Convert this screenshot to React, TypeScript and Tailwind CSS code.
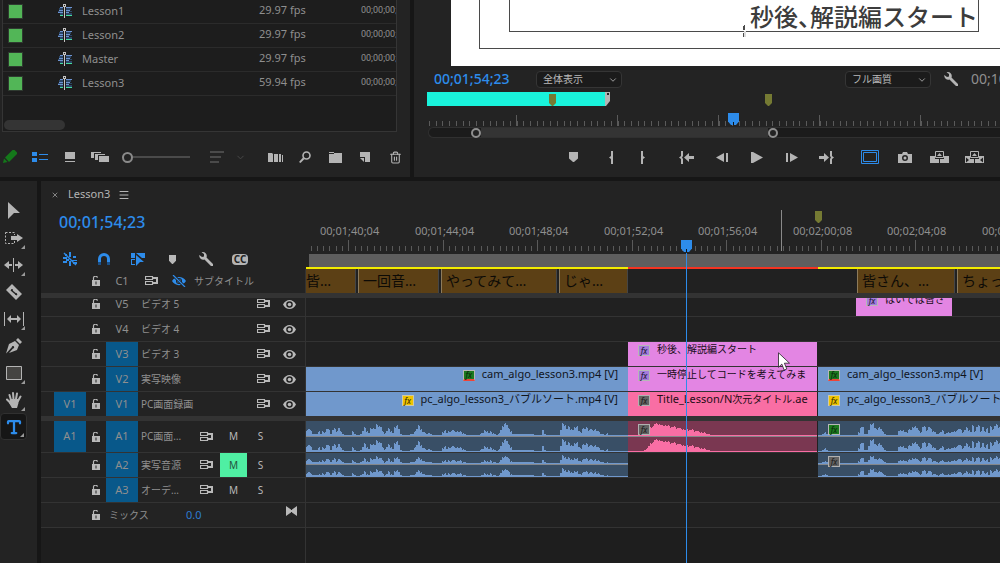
import type { ReactNode } from 'react';
import { cx } from 'class-variance-authority';
import { ChevronDown, Menu, Trash2, Type, X } from 'lucide-react';

const FONT = "font-['Noto_Sans','Noto_Sans_CJK_JP',sans-serif]";

const sequences = [
  { name: 'Lesson1', fps: '29.97 fps', start: '00;00;00;00' },
  { name: 'Lesson2', fps: '29.97 fps', start: '00;00;00;00' },
  { name: 'Master', fps: '29.97 fps', start: '00;00;00;00' },
  { name: 'Lesson3', fps: '59.94 fps', start: '00;00;00;00' },
];

/* ---------- icons ---------- */

const Svg = ({ w, h, children, className }: { w: number; h: number; children: ReactNode; className?: string }) => (
  <svg width={w} height={h} viewBox={`0 0 ${w} ${h}`} fill="currentColor" className={cx('shrink-0', className)} aria-hidden="true">
    {children}
  </svg>
);

const SequenceIcon = () => (
  <Svg w={14} h={14}>
    <path fill="#2c4768" d="M1 4h4v2H1zM0 7h5v1H0zM8 4h5v2H8zM8 7h6v1H8zM2 9h3v2H2zM8 9h6v2H8z" />
    <path fill="#6d93d0" d="M2 3h3v1H2zM1 6h4v1H1zM0 8h5v1H0zM8 3h6v1H8zM8 6h4v1H8zM8 8h3v1H8z" />
    <path fill="#45dca0" d="M2 11h3v1H2zM8 11h6v1H8z" />
    <path fill="#c4c4c4" d="M5 0h3v3H7v11H6V3H5z" />
    <path fill="#1d1d1d" d="M6 1h1v1H6z" />
  </Svg>
);

const PenIcon = () => (
  <Svg w={14} h={14} className="text-[#14781a]">
    <path d="M0 13l1-4.500 3.500 3.500zM2 7.500L9.500 0h2L14 2.500v1.500L6 12z" />
  </Svg>
);

const ListIcon = () => (
  <Svg w={16} h={10} className="text-[#2d8ceb]">
    <path d="M0 0h5v4H0zM0 6h5v4H0zM7 2h9v1H7zM7 7h9v1H7z" />
  </Svg>
);

const ThumbIcon = () => (
  <Svg w={10} h={10}>
    <path d="M0 0h10v7H0zM0 9h10v1H0z" />
  </Svg>
);

const StackIcon = () => (
  <Svg w={18} h={10}>
    <path d="M0 0h10v1H3v5H0zM4 2h10v1H7v5H4zM8 4h10v6H8z" />
  </Svg>
);

const SortIcon = () => (
  <Svg w={14} h={12} className="text-[#4a4a4a]">
    <path d="M0 0h14v2H0zM0 5h11v2H0zM0 10h9v2H0z" />
  </Svg>
);

const AutomateIcon = () => (
  <Svg w={15} h={9}>
    <path d="M0 0h4l1 1v8H0zM6 1h4v8H6zM11 1h2v8h-2zM14 2h1v7h-1z" />
  </Svg>
);

const SearchIcon = () => (
  <Svg w={12} h={12}>
    <circle cx="7.500" cy="4.500" r="3.500" fill="none" stroke="currentColor" strokeWidth="1.600" />
    <path d="M0 11l4-4.500 1.500 1.500L1.500 12z" />
  </Svg>
);

const BinIcon = () => (
  <Svg w={13} h={11}>
    <path d="M0 0h5v1H0zM0 2h5V1h8v10H0z" />
  </Svg>
);

const NewItemIcon = () => (
  <Svg w={10} h={10}>
    <path d="M0 0h10v10H5V5H0z" />
    <path d="M0 6h4v4z" />
  </Svg>
);

const WrenchIcon = () => (
  <Svg w={14} h={14}>
    <path d="M2.500 .3a4 4 0 0 1 5 5.200L14 12a1.300 1.300 0 0 1-2 2L5.500 7.500A4 4 0 0 1 .3 3L3 5l2-.6L5 2z" />
  </Svg>
);

const MarkerIcon = ({ small }: { small?: boolean }) => (
  <svg width={small ? 7 : 9} height={small ? 9 : 10} viewBox="0 0 9 10" preserveAspectRatio="none" fill="currentColor" aria-hidden="true">
    <path d="M0 0h9v6.500L5 10H4L0 6.500z" />
  </svg>
);

const OliveMarker = () => (
  <Svg w={7} h={12} className="text-[#757a33]">
    <path d="M0 0h7v9L4 12H3L0 9z" />
  </Svg>
);

const PlayheadIcon = () => (
  <Svg w={11} h={12} className="text-[#2d8ceb]">
    <path d="M0 0h11v8.500L8 12H3L0 8.500z" />
    <path fill="#111" d="M5 9h1v3H5z" />
  </Svg>
);

const InIcon = () => (
  <Svg w={4} h={13}>
    <path d="M2 0h2v13H2V8L0 6.500 2 5z" />
  </Svg>
);

const OutIcon = () => (
  <Svg w={4} h={13}>
    <path d="M0 0h2v5l2 1.500L2 8v5H0z" />
  </Svg>
);

const GoInIcon = () => (
  <Svg w={15} h={13}>
    <path d="M2 0h2v5L3 6.500 4 8v5H2V8L0 6.500 2 5zM5 6.500L10 2v3h5v3h-5v3z" />
  </Svg>
);

const GoOutIcon = () => (
  <Svg w={15} h={13}>
    <path d="M13 0h-2v5l1 1.500L11 8v5h2V8l2-1.500L13 5zM10 6.500L5 2v3H0v3h5v3z" />
  </Svg>
);

const StepBackIcon = () => (
  <Svg w={12} h={9}>
    <path d="M8 0v9L0 4.500zM10 0h2v9h-2z" />
  </Svg>
);

const StepForwardIcon = () => (
  <Svg w={12} h={9}>
    <path d="M4 0v9l8-4.500zM0 0h2v9H0z" />
  </Svg>
);

const PlayIcon = () => (
  <Svg w={12} h={11}>
    <path d="M0 0h2l10 5.500L2 11H0z" />
  </Svg>
);

const SafeMarginsIcon = () => (
  <Svg w={18} h={14} className="text-[#2d8ceb]">
    <path d="M.5 .5h17v13H.5zM2.500 2.500h13v9h-13z" fill="none" stroke="currentColor" />
  </Svg>
);

const CameraIcon = () => (
  <Svg w={14} h={11}>
    <path fillRule="evenodd" d="M0 2h4l1-2h4l1 2h4v9H0zM7 3a3 3 0 1 0 0 6 3 3 0 0 0 0-6z" />
    <circle cx="7" cy="6" r="1.500" />
  </Svg>
);

const LiftIcon = () => (
  <Svg w={19} h={12}>
    <path d="M5.500 .5h8v6h-8z" fill="none" stroke="currentColor" />
    <path d="M0 5h5v3h4v4H0zM14 5h5v7h-9V8h4zM7 5l2.500-3L12 5z" />
  </Svg>
);

const ExtractIcon = () => (
  <Svg w={19} h={12}>
    <path d="M5.500 .5h8v6h-8z" fill="none" stroke="currentColor" />
    <path d="M0 5h5v3h4v4H0zM14 5h5v7h-9V8h4zM7 5l2.500-3L12 5z" />
    <path fill="#232323" d="M1 6.500L4 9l-3 2.500zM18 6.500L15 9l3 2.500z" />
  </Svg>
);

const NestIcon = () => (
  <Svg w={14} h={14} className="text-[#2d8ceb]">
    <path d="M6 0h2v5H6zM0 5h4v2H0zM10 4h3v2h-3zM0 9h4v2H0zM6 9h2v5H6zM9 8h5v1H9zM10 10h4v2h-4zM3 7h3v2H3zM2 2h2v2H2z" />
    <path d="M1 1l12 12" stroke="currentColor" strokeWidth="1.400" />
  </Svg>
);

const MagnetIcon = () => (
  <Svg w={12} h={12}>
    <path d="M1.500 9V6a4.500 4.500 0 0 1 9 0v3" fill="none" stroke="#2d8ceb" strokeWidth="3" />
    <path fill="#1a4f86" d="M0 9h3v3H0zM9 9h3v3H9z" />
  </Svg>
);

const LinkedIcon = () => (
  <Svg w={14} h={13} className="text-[#2d8ceb]">
    <path d="M0 0h4v5H0zM5 0h9v5h-3L5 0zM5 2l8 7H9l-4 4zM1 7v4h3v1H0V6h4v1z" />
  </Svg>
);

const LockIcon = () => (
  <Svg w={8} h={10}>
    <path d="M1.500 5V2.500a2 2 0 0 1 4-.8" fill="none" stroke="currentColor" strokeWidth="1.200" />
    <path fillRule="evenodd" d="M0 4h8v6H0zM3.500 5.500v3h1v-3z" />
  </Svg>
);

const SyncIcon = () => (
  <Svg w={13} h={10}>
    <path d="M.5 .5h7v3h-7zM.5 5.500h7v3h-7z" fill="none" stroke="currentColor" strokeWidth="1.200" />
    <path d="M8 1h5v7H8V6h3V3H8z" />
  </Svg>
);

const EyeIcon = () => (
  <Svg w={13} h={9}>
    <path fillRule="evenodd" d="M0 4.500C3-1.500 10-1.500 13 4.500 10 10.500 3 10.500 0 4.500zM6.500 1.200a3.300 3.300 0 1 0 0 6.600 3.300 3.300 0 0 0 0-6.600z" />
    <circle cx="6.500" cy="4.500" r="1.800" />
  </Svg>
);

const EyeOffIcon = () => (
  <Svg w={14} h={12} className="text-[#2d8ceb]">
    <path fillRule="evenodd" d="M0 6c3-5.500 11-5.500 14 0-3 5.500-11 5.500-14 0zM7 3a3 3 0 1 0 0 6 3 3 0 0 0 0-6z" />
    <circle cx="7" cy="6" r="2" />
    <path d="M1 0l12 12" stroke="#232323" strokeWidth="3" />
    <path d="M1 0l12 12" stroke="currentColor" strokeWidth="1.200" />
  </Svg>
);

const FitIcon = () => (
  <Svg w={11} h={10}>
    <path d="M0 0l5 3.500v3L0 10zM11 0L6 3.500v3L11 10z" />
    <path d="M5 4h1v2H5z" />
  </Svg>
);

/* ---------- tools ---------- */

const tools: { name: string; corner?: boolean; active?: boolean; icon: ReactNode }[] = [
  { name: '選択ツール', icon: <Svg w={12} h={17}><path d="M0 0l12 11H6l-6 6z" /></Svg> },
  {
    name: 'トラックの前方選択ツール',
    corner: true,
    icon: (
      <Svg w={18} h={12}>
        <path d="M.5 .5h9v11h-9z" fill="none" stroke="currentColor" strokeDasharray="2 1.500" />
        <path fill="#232323" d="M6 3h6v6H6z" />
        <path d="M6 4h6V2l6 4-6 4V8H6z" />
      </Svg>
    ),
  },
  {
    name: 'リップルツール',
    corner: true,
    icon: <Svg w={19} h={14}><path d="M9 0h1v14H9zM0 7l5-4v3h3v2H5v3zM19 7l-5-4v3h-3v2h3v3z" /></Svg>,
  },
  {
    name: 'レーザーツール',
    icon: (
      <Svg w={16} h={16}>
        <path d="M6 0l10 10-6 6L0 6z" />
        <path d="M5 6l6 5" stroke="#232323" strokeWidth="1.500" />
        <circle cx="6" cy="6" r="1" fill="#232323" />
        <circle cx="10" cy="10" r="1" fill="#232323" />
      </Svg>
    ),
  },
  {
    name: 'スリップツール',
    corner: true,
    icon: <Svg w={20} h={14}><path d="M0 0h1v14H0zM19 0h1v14h-1zM3 7l4-4v3h6V3l4 4-4 4V8H7v3z" /></Svg>,
  },
  {
    name: 'ペンツール',
    icon: (
      <Svg w={16} h={16}>
        <path d="M10 2l2-2 4 4-2 2zM9 3l4 4-2 5-8 3 4-4.500a1.200 1.200 0 1 0-1.200-1.200L1.500 14 0 15.500 3 6z" />
      </Svg>
    ),
  },
  {
    name: '長方形ツール',
    corner: true,
    icon: <Svg w={16} h={14}><path d="M.5 .5h15v13H.5z" fill="#454442" stroke="currentColor" /></Svg>,
  },
  {
    name: '手のひらツール',
    corner: true,
    icon: (
      <Svg w={16} h={16}>
        <g stroke="currentColor" strokeWidth="2" strokeLinecap="round">
          <path d="M5 8L3.500 3M7.500 7L7 1M10 7l1-5.500M12 9l2.500-4.500M4.500 11L1 7.500" />
        </g>
        <path d="M4 7h8.500v4L11 16H6l-3-5z" />
      </Svg>
    ),
  },
  {
    name: '横書き文字ツール',
    corner: true,
    active: true,
    icon: <Type size={18} strokeWidth={3} className="text-[#2d8ceb]" />,
  },
];

const ToolBar = () => (
  <nav aria-label="ツール" className="flex w-[37px] shrink-0 flex-col bg-[#232323] pt-4">
    {tools.map((tool) => (
      <button
        key={tool.name}
        aria-label={tool.name}
        className={cx(
          'relative flex h-[27px] w-[27px] items-center justify-center text-[#b4b4b4]',
          tool.active && 'rounded-sm border border-[#303030] bg-[#161616]'
        )}
      >
        {tool.icon}
        {tool.corner && (
          <svg width="4" height="4" viewBox="0 0 4 4" className="absolute right-0.5 bottom-0.5" aria-hidden="true">
            <path d="M4 0v4H0z" fill="#9a9a9a" />
          </svg>
        )}
      </button>
    ))}
  </nav>
);

/* ---------- project panel ---------- */

const BarButton = ({ label, className, children }: { label: string; className?: string; children: ReactNode }) => (
  <button aria-label={label} className={cx('flex h-6 shrink-0 items-center justify-center text-[#b4b4b4]', className)}>
    {children}
  </button>
);

const ProjectPanel = () => (
  <section className="flex w-[41%] shrink-0 flex-col bg-[#232323]">
    <div className="mr-[13px] ml-[2px] border-x border-b border-[#353535] bg-[#1d1d1d]">
      <table className="w-full table-fixed border-separate border-spacing-0 text-left text-[11px] text-[#8f8f8f]">
        <tbody>
          {sequences.map((seq) => (
            <tr key={seq.name}>
              <td className="h-6 w-[55px] border-b border-[#2b2b2b] p-0 pl-[5px]">
                <div className="size-[15px] border border-[#2f3a30] bg-[#52b657]" />
              </td>
              <td className="h-6 w-[201px] border-b border-[#2b2b2b] p-0 align-top">
                <div className="flex items-center gap-2.5 leading-[22px]">
                  <SequenceIcon />
                  {seq.name}
                </div>
              </td>
              <td className="h-6 w-[102px] border-b border-[#2b2b2b] p-0 align-top leading-5">{seq.fps}</td>
              <td className="h-6 overflow-hidden border-b border-[#2b2b2b] p-0 align-top font-['Roboto',sans-serif] text-[9px] leading-5 whitespace-nowrap">
                {seq.start}
              </td>
            </tr>
          ))}
        </tbody>
      </table>
      <div className="flex h-[35px] items-end pb-px pl-px">
        <div className="h-2.5 w-[61px] rounded-full bg-[#343434]" />
      </div>
    </div>
    <div className="flex items-center pt-[13px] pb-2">
      <BarButton label="書き込み可能" className="mr-[5px] w-5"><PenIcon /></BarButton>
      <BarButton label="リスト表示" className="w-[30px]"><ListIcon /></BarButton>
      <BarButton label="アイコン表示" className="w-[30px]"><ThumbIcon /></BarButton>
      <BarButton label="フリーフォーム表示" className="w-[30px]"><StackIcon /></BarButton>
      <input
        type="range"
        aria-label="ズーム"
        defaultValue={0}
        className="mr-3 ml-[7px] h-3 w-[68px] shrink-0 appearance-none bg-[linear-gradient(#4a4a4a,#4a4a4a)] bg-[length:100%_2px] bg-center bg-no-repeat [&::-webkit-slider-thumb]:size-[11px] [&::-webkit-slider-thumb]:appearance-none [&::-webkit-slider-thumb]:rounded-full [&::-webkit-slider-thumb]:border-2 [&::-webkit-slider-thumb]:border-[#8a8a8a] [&::-webkit-slider-thumb]:bg-[#232323]"
      />
      <BarButton label="アイコンの並べ替え" className="w-[30px]"><SortIcon /></BarButton>
      <BarButton label="並べ替えメニュー" className="mr-3 w-4"><ChevronDown size={11} className="text-[#4a4a4a]" /></BarButton>
      <BarButton label="シーケンスへオート編集" className="w-[30px]"><AutomateIcon /></BarButton>
      <BarButton label="検索" className="w-[30px]"><SearchIcon /></BarButton>
      <BarButton label="新規ビン" className="w-[30px]"><BinIcon /></BarButton>
      <BarButton label="新規項目" className="w-[30px]"><NewItemIcon /></BarButton>
      <BarButton label="消去" className="w-[30px]"><Trash2 size={13} strokeWidth={2} /></BarButton>
    </div>
  </section>
);

/* ---------- program monitor ---------- */

const MonitorSelect = ({ label, value }: { label: string; value: string }) => (
  <div className="relative shrink-0">
    <select
      aria-label={label}
      className="block h-[17px] w-[86px] appearance-none rounded-sm border border-[#353535] bg-[#1b1b1b] pl-1.5 text-[10px] leading-[15px] text-[#b9b9b9]"
    >
      <option>{value}</option>
    </select>
    <ChevronDown size={10} className="absolute top-1 right-1 text-[#b4b4b4]" />
  </div>
);

const monitorMajors = [102, 203, 304, 405, 506];

const MonitorRuler = () => (
  <svg width="100%" height="11" className="block text-[#5a5a5a]" shapeRendering="crispEdges" aria-hidden="true">
    {Array.from({ length: 90 }, (_, i) => Math.round(15 + i * 6.733)).map((x) => (
      <rect key={x} x={x} y="6" width="1" height="5" fill="currentColor" />
    ))}
    {monitorMajors.map((x) => (
      <rect key={x} x={x} y="0" width="1" height="11" fill="currentColor" />
    ))}
  </svg>
);

const ProgramMonitor = () => (
  <section className="flex min-w-0 flex-1 flex-col overflow-hidden bg-[#232323]">
    <div className="relative ml-[37px] h-[66px] bg-white pl-7">
      <div className="h-[49px] border-b border-l border-[#4a4a4a] pr-[21px] pl-[29px]">
        <div className="h-8 border-r border-b border-l border-[#4a4a4a] text-right font-['Noto_Sans_CJK_JP',sans-serif] text-2xl leading-8 font-medium whitespace-nowrap text-[#3c3c3c] [font-feature-settings:'halt']">
          秒後、解説編スタート
        </div>
      </div>
      {/* text caret */}
      <svg width="3" height="12" className="absolute top-[25px] left-[292px]" shapeRendering="crispEdges" aria-hidden="true">
        <path d="M1 0h1v5H1zM0 1h1v4H0zM0 8h1v4H0z" fill="#4a4a4a" />
        <path d="M1 6h2v6H1z" fill="#dcdcdc" />
      </svg>
    </div>
    <div className="flex h-[26px] items-center pl-5 whitespace-nowrap">
      <span className="w-[102px] shrink-0 text-sm leading-4 font-medium text-[#2d8ceb]">00;01;54;23</span>
      <MonitorSelect label="ズームレベルを選択" value="全体表示" />
      <div className="flex-1" />
      <MonitorSelect label="再生時の解像度" value="フル画質" />
      <button aria-label="設定" className="mx-3 flex h-5 w-4 shrink-0 items-center justify-center text-[#b4b4b4]">
        <WrenchIcon />
      </button>
      <div className="w-[29px] shrink-0 overflow-hidden text-sm leading-4 text-[#8f8f8f]">00;10;01;04</div>
    </div>
    <div className="relative flex h-[21px] items-start pl-[13px]">
      <div className="h-3.5 w-[178px] bg-[#19f3dc]" />
      <Svg w={6} h={14}>
        <path fill="#b4b4b4" d="M0 0h5v9l-4 5H0z" />
        <path fill="#232323" d="M2 1h2v2H2z" />
      </Svg>
      <div className="absolute top-0.5 left-[135px]"><OliveMarker /></div>
      <div className="absolute top-0.5 left-[351px]"><OliveMarker /></div>
      <div className="absolute top-[21px] left-[314px]"><PlayheadIcon /></div>
    </div>
    <div className="pt-0.5"><MonitorRuler /></div>
    <div className="mt-px ml-3.5 flex h-[11px] items-center rounded-l-full border-y border-l border-[#303030] bg-[#1b1b1b]">
      <div className="ml-[42px] size-2.5 shrink-0 rounded-full border-2 border-[#8f8f8f] bg-[#232323]" />
      <div className="h-full w-[287px] bg-[#343434]" />
      <div className="size-2.5 shrink-0 rounded-full border-2 border-[#8f8f8f] bg-[#232323]" />
    </div>
    <div className="flex items-center pt-[7px] pl-[143px]">
      <BarButton label="マーカーを追加" className="mr-1.5 w-8"><MarkerIcon /></BarButton>
      <BarButton label="インをマーク" className="w-8"><InIcon /></BarButton>
      <BarButton label="アウトをマーク" className="mr-2.5 w-8"><OutIcon /></BarButton>
      <BarButton label="インポイントへ移動" className="w-[35px]"><GoInIcon /></BarButton>
      <BarButton label="1フレーム前へ戻る" className="w-[35px]"><StepBackIcon /></BarButton>
      <BarButton label="再生" className="w-[35px]"><PlayIcon /></BarButton>
      <BarButton label="1フレーム先へ進む" className="w-[35px]"><StepForwardIcon /></BarButton>
      <BarButton label="アウトポイントへ移動" className="mr-2 w-[35px]"><GoOutIcon /></BarButton>
      <BarButton label="セーフマージン" className="w-[35px]"><SafeMarginsIcon /></BarButton>
      <BarButton label="フレームを書き出し" className="w-[35px]"><CameraIcon /></BarButton>
      <BarButton label="リフト" className="w-[35px]"><LiftIcon /></BarButton>
      <BarButton label="抽出" className="w-[35px]"><ExtractIcon /></BarButton>
    </div>
  </section>
);

/* ---------- timeline ---------- */

// one hex digit per 2px step, value = bar height
const WAVE_LEFT = [
  '5641114133', '6515647310', '0003100147', '42676a9832', '46427a6100', '0011469632',
  '1210000025', '2345343321', '0000000224', '423210258c', 'a641111111', '1111000051',
  '00000005ba', '6865794276', '7564643110', '20000000000',
].join('');
const WAVE_RIGHT = [
  '0013100000', '0000000000', '288115ac75', '8631000000', '4453265797', '4388586431',
  '2341223335', '6535753948', '948372869a', '8642100000',
].join('');
const WAVE_TITLE = '0000000013579bbba9a9988877665655544332211';

const wavePath = (data: string, base: number, scale: number) => {
  let d = `M0 ${base}`;
  [...data].forEach((c, i) => {
    const h = parseInt(c, 16) * scale;
    const a = h > 1 ? Math.round(h) + ((i * 7) % 3) - 1 : Math.ceil(h);
    d += `V${base - 1 - a}H${i * 2 + 1}V${base - 1 - Math.round(h)}H${i * 2 + 2}`;
  });
  return `${d}V${base - 1}H400V${base}Z`;
};

type Clip = {
  start: number;
  end: number;
  kind: 'caption' | 'video' | 'title' | 'ae' | 'audio' | 'aeAudio';
  label?: ReactNode;
  fx?: 'purple' | 'green' | 'yellow' | 'gray' | 'plainGreen';
  right?: boolean;
  wave?: string;
};

const clipStyles: Record<Clip['kind'], string> = {
  caption: 'border-l border-[#8d7b5b] bg-[#5c4015] text-sm leading-6 pl-1 text-[#0c0a06] shadow-[1px_0_0_#454545]',
  video: 'bg-[#7098cc] text-[11px] leading-[14px] text-[#10151c]',
  title: 'bg-[#e385e3] text-[10px] leading-[14px] text-[#160c16]',
  ae: 'bg-[#f96ea4] text-[11px] leading-[14px] text-[#240d17]',
  audio: 'bg-[#394f66]',
  aeAudio: 'bg-[#7a3751]',
};

const fxStyles = {
  purple: 'bg-[#a57bdc] border-[#b7b7b7] text-[#2b2344]',
  green: 'bg-[#1c7a1f] border-[#b7b7b7] border-b-2 border-b-[#ee4438] text-[#0b300c]',
  plainGreen: 'bg-[#1c7a1f] border-[#b7b7b7] text-[#0b300c]',
  yellow: 'bg-[#f0c400] border-[#cfc9a8] text-[#4a3c00]',
  gray: 'bg-[#636363] border-[#b0b0b0] text-[#242424]',
};

const FxBadge = ({ tone }: { tone: keyof typeof fxStyles }) => (
  <span
    className={cx(
      'flex h-[11px] w-3 shrink-0 items-center justify-center border text-[8px] leading-[8px] font-medium italic',
      fxStyles[tone]
    )}
  >
    fx
  </span>
);

const Wave = ({ data, rowHeight, color }: { data: string; rowHeight: number; color: string }) => {
  const mid = Math.ceil(rowHeight / 2) - 1;
  const scale = rowHeight > 26 ? 1 : 0.6;
  return (
    <svg width="100%" height={rowHeight} className="block" shapeRendering="crispEdges" aria-hidden="true">
      <path d={wavePath(data, mid, scale)} fill={color} />
      <rect x="0" y={mid} width="100%" height="1" fill="#85878a" />
      <path d={wavePath(data, rowHeight, scale)} fill={color} />
    </svg>
  );
};

const LANE_START = 306;

const Lane = ({ clips, height }: { clips: Clip[]; height: number }) => (
  <div className="flex h-full min-w-0 flex-1 overflow-hidden">
    {clips.map((clip, i) => (
      <div
        key={i}
        className={cx('relative h-full shrink-0 overflow-hidden whitespace-nowrap', clipStyles[clip.kind])}
        style={{
          marginLeft: clip.start - (i === 0 ? LANE_START : clips[i - 1].end),
          width: clip.end - clip.start,
        }}
      >
        {clip.wave && (
          <Wave data={clip.wave} rowHeight={height} color={clip.kind === 'audio' ? '#7098cc' : '#f96ea4'} />
        )}
        {clip.wave && clip.fx && (
          <div className="absolute top-[3px] left-[10px]"><FxBadge tone={clip.fx} /></div>
        )}
        {!clip.wave && clip.fx && (
          <div className={cx('flex items-start gap-[7px] px-[10px]', clip.right && 'justify-end')}>
            <div className="pt-[3px]"><FxBadge tone={clip.fx} /></div>
            <span>{clip.label}</span>
          </div>
        )}
        {!clip.wave && !clip.fx && clip.label}
      </div>
    ))}
  </div>
);

const camLabel = 'cam_algo_lesson3.mp4 [V]';
const pcLabel = 'pc_algo_lesson3_バブルソート.mp4 [V]';

const captionClips: Clip[] = [
  { start: 301, end: 355, kind: 'caption', label: '皆…' },
  { start: 358, end: 438, kind: 'caption', label: '一回音…' },
  { start: 441, end: 556, kind: 'caption', label: 'やってみて…' },
  { start: 559, end: 627, kind: 'caption', label: 'じゃ…' },
  { start: 857, end: 954, kind: 'caption', label: '皆さん、…' },
  { start: 957, end: 1100, kind: 'caption', label: 'ちょっと…' },
];

type Track = {
  id: string;
  name: string;
  row: string;
  height: number;
  target?: boolean;
  patch?: string;
  audio?: boolean;
  muted?: boolean;
  clips: Clip[];
};

const videoTracks: Track[] = [
  {
    id: 'V5', name: 'ビデオ 5', row: 'h-[19px] border-b', height: 18,
    clips: [{ start: 856, end: 952, kind: 'title', fx: 'purple', label: 'はいでは皆さ' }],
  },
  { id: 'V4', name: 'ビデオ 4', row: 'h-[25px] border-b', height: 24, clips: [] },
  {
    id: 'V3', name: 'ビデオ 3', row: 'h-[25px] border-b', height: 24, target: true,
    clips: [{ start: 628, end: 817, kind: 'title', fx: 'purple', label: '秒後、解説編スタート' }],
  },
  {
    id: 'V2', name: '実写映像', row: 'h-[25px] border-b', height: 24, target: true,
    clips: [
      { start: 306, end: 628, kind: 'video', fx: 'green', right: true, label: camLabel },
      { start: 628, end: 817, kind: 'title', fx: 'purple', label: '一時停止してコードを考えてみま' },
      { start: 818, end: 1100, kind: 'video', fx: 'green', label: camLabel },
    ],
  },
  {
    id: 'V1', name: 'PC画面録画', row: 'h-6', height: 24, target: true, patch: 'V1',
    clips: [
      { start: 306, end: 628, kind: 'video', fx: 'yellow', right: true, label: pcLabel },
      {
        start: 628, end: 817, kind: 'ae', fx: 'gray',
        label: <>Title_Lesson/N<span className="text-[10px]">次元タイトル</span>.ae</>,
      },
      { start: 818, end: 1100, kind: 'video', fx: 'yellow', label: pcLabel },
    ],
  },
];

const audioTracks: Track[] = [
  {
    id: 'A1', name: 'PC画面…', row: 'h-8 border-b', height: 31, target: true, patch: 'A1', audio: true,
    clips: [
      { start: 306, end: 628, kind: 'audio', wave: WAVE_LEFT },
      { start: 628, end: 817, kind: 'aeAudio', fx: 'gray', wave: WAVE_TITLE },
      { start: 818, end: 1100, kind: 'audio', fx: 'plainGreen', wave: WAVE_RIGHT },
    ],
  },
  {
    id: 'A2', name: '実写音源', row: 'h-[25px] border-b', height: 24, target: true, audio: true, muted: true,
    clips: [
      { start: 306, end: 628, kind: 'audio', wave: WAVE_LEFT },
      { start: 818, end: 1100, kind: 'audio', fx: 'gray', wave: WAVE_RIGHT },
    ],
  },
  { id: 'A3', name: 'オーデ…', row: 'h-[25px] border-b', height: 24, target: true, audio: true, clips: [] },
];

const HeadButton = ({ label, className, children }: { label: string; className: string; children: ReactNode }) => (
  <button aria-label={label} className={cx('flex h-full shrink-0 items-center justify-center text-[#b9b9b9]', className)}>
    {children}
  </button>
);

const TrackRow = ({ track }: { track: Track }) => (
  <div className={cx('flex items-end overflow-hidden border-[#333333]', track.row)}>
    <div
      className={cx(
        'flex w-[265px] shrink-0 items-stretch border-r border-[#333333] bg-[#232323] pl-[13px] text-[11px] text-[#8f8f8f]',
        track.id === 'A1' ? 'h-[31px]' : 'h-6'
      )}
    >
      {track.patch ? (
        <button className="w-8 shrink-0 bg-[#08588a]">{track.patch}</button>
      ) : (
        <div className="w-8 shrink-0" />
      )}
      <HeadButton label={`${track.id} ロック`} className="w-5"><LockIcon /></HeadButton>
      <button className={cx('w-8 shrink-0', track.target && 'bg-[#08588a]')}>{track.id}</button>
      <div className="flex min-w-0 flex-1 items-center pl-[3px] text-[10px] whitespace-nowrap">{track.name}</div>
      {track.audio ? (
        <div className="flex items-stretch pr-[31px]">
          <HeadButton label="同期ロック" className="w-[27px]"><SyncIcon /></HeadButton>
          <button aria-label="ミュート" className={cx('w-[27px] text-[10px]', track.muted ? 'bg-[#4fefa3] text-[#24543d]' : 'text-[#b9b9b9]')}>
            M
          </button>
          <button aria-label="ソロ" className="w-[27px] text-[10px] text-[#b9b9b9]">S</button>
        </div>
      ) : (
        <div className="flex items-stretch pr-0.5">
          <HeadButton label="同期ロック" className="w-[26px]"><SyncIcon /></HeadButton>
          <HeadButton label="トラック出力の切り替え" className="w-[27px]"><EyeIcon /></HeadButton>
        </div>
      )}
    </div>
    <div className={cx('min-w-0 flex-1', track.id === 'A1' ? 'h-[31px]' : 'h-6')}>
      <Lane clips={track.clips} height={track.height} />
    </div>
  </div>
);

const rulerMarks = [
  { x: 42, label: '00;01;40;04' },
  { x: 137, label: '00;01;44;04' },
  { x: 231, label: '00;01;48;04' },
  { x: 326, label: '00;01;52;04' },
  { x: 420, label: '00;01;56;04' },
  { x: 515, label: '00;02;00;08' },
  { x: 609, label: '00;02;04;08' },
  { x: 704, label: '00;02;08;08' },
];

const TimelineRuler = () => (
  <div className="flex min-w-0 flex-1 flex-col overflow-hidden">
    <div className="relative h-[59px] text-[11px] leading-4 whitespace-nowrap text-[#8f8f8f]">
      {rulerMarks.map((mark) => (
        <span key={mark.x} className="absolute bottom-px" style={{ left: mark.x - 28 }}>
          {mark.label}
        </span>
      ))}
    </div>
    <svg width="100%" height="11" className="block" shapeRendering="crispEdges" aria-hidden="true">
      {Array.from({ length: 110 }, (_, i) => Math.round(4.5 + i * 6.3)).map((x) => (
        <rect key={x} x={x} y="6" width="1" height="5" fill="#5a5a5a" />
      ))}
      {rulerMarks.map((mark) => (
        <rect key={mark.x} x={mark.x} y="0" width="1" height="11" fill="#5a5a5a" />
      ))}
    </svg>
    <div className="mt-[3px] ml-[3px] h-[13px] bg-[#5e5e5e]" />
    <div className="flex h-0.5">
      <div className="w-[322px] bg-[#f2ec00]" />
      <div className="w-[190px] bg-[#f43321]" />
      <div className="flex-1 bg-[#f2ec00]" />
    </div>
  </div>
);

const TimelinePanel = () => (
  <section className="relative flex min-w-0 flex-1 flex-col overflow-hidden bg-[#1e1e1e]">
    <div className="flex h-[88px] bg-[#232323]">
      <div className="flex w-[265px] shrink-0 flex-col">
        <div className="flex h-[27px] items-center pl-2.5 text-[11px] text-[#b4b4b4]">
          <button aria-label="閉じる" className="mr-[9px]"><X size={8} /></button>
          <span className="mr-2">Lesson3</span>
          <button aria-label="パネルメニュー"><Menu size={12} /></button>
        </div>
        <div className="h-7 pl-[18px] text-base leading-7 font-medium text-[#2d8ceb]">00;01;54;23</div>
        <div className="flex h-[33px] items-end pl-3">
          <div className="flex h-5 text-[#b4b4b4]">
            <HeadButton label="ネスト" className="w-[34px]"><NestIcon /></HeadButton>
            <HeadButton label="スナップ" className="w-[34px]"><MagnetIcon /></HeadButton>
            <HeadButton label="リンクされた選択" className="w-[34px]"><LinkedIcon /></HeadButton>
            <HeadButton label="マーカーを追加" className="w-[34px]"><MarkerIcon small /></HeadButton>
            <HeadButton label="タイムライン表示設定" className="w-[34px]"><WrenchIcon /></HeadButton>
            <HeadButton label="キャプショントラック" className="w-[34px]">
              <span className="flex h-[11px] w-4 items-center justify-center rounded-sm bg-[#b4b4b4] text-[10px] leading-[11px] font-bold text-[#232323]">
                CC
              </span>
            </HeadButton>
          </div>
        </div>
      </div>
      <TimelineRuler />
    </div>

    <div className="flex h-6 bg-[#212121]">
      <div className="flex w-[265px] shrink-0 items-stretch border-r border-[#333333] bg-[#232323] pl-[45px] text-[11px] text-[#8f8f8f]">
        <HeadButton label="C1 ロック" className="w-5"><LockIcon /></HeadButton>
        <button className="w-8">C1</button>
        <HeadButton label="同期ロック" className="w-[27px]"><SyncIcon /></HeadButton>
        <HeadButton label="トラックの表示" className="w-[27px]"><EyeOffIcon /></HeadButton>
        <div className="flex items-center pl-0.5 text-[10px]">サブタイトル</div>
      </div>
      <Lane clips={captionClips} height={24} />
    </div>
    <div className="h-[5px] bg-[#333333]" />
    <div className="bg-[#212121]">
      {videoTracks.map((track) => <TrackRow key={track.id} track={track} />)}
    </div>
    <div className="h-[5px] bg-[#333333]" />
    <div className="bg-[#212121]">
      {audioTracks.map((track) => <TrackRow key={track.id} track={track} />)}
      <div className="flex h-[25px] border-b border-[#333333]">
        <div className="flex w-[265px] shrink-0 items-stretch border-r border-[#333333] bg-[#232323] pr-2 pl-[45px] text-[#8f8f8f]">
          <HeadButton label="ミックス ロック" className="w-5"><LockIcon /></HeadButton>
          <div className="flex w-20 items-center pl-[3px] text-[10px]">ミックス</div>
          <button className="text-[11px] text-[#2d7bd0]">0.0</button>
          <div className="flex flex-1 justify-end pt-[3px] text-[#b9b9b9]"><FitIcon /></div>
        </div>
      </div>
    </div>
    <div className="flex flex-1">
      <div className="w-[265px] border-r border-[#333333]" />
    </div>

    <div className="pointer-events-none absolute inset-y-0 right-0 left-[265px]">
      <div className="absolute top-[29px] left-[475px] h-[41px] w-px bg-[#8a8a8a]" />
      <div className="absolute top-[30px] left-[509px]"><OliveMarker /></div>
      <div className="absolute top-[72px] bottom-0 left-[380px] w-px bg-[#2d8ceb]" />
      <div className="absolute top-[59px] left-[375px]"><PlayheadIcon /></div>
      <svg width="13" height="19" viewBox="0 0 13 19" className="absolute top-[171px] left-[472px]" aria-hidden="true">
        <path d="M.5 .8v14.500l3.300-3.200 2.400 5.900 2.600-1.100-2.400-5.700h5.100z" fill="#fff" stroke="#222" strokeWidth=".8" />
      </svg>
    </div>
  </section>
);

export default function App() {
  return (
    <div className={cx('flex min-h-screen flex-col gap-1 overflow-hidden bg-[#161616]', FONT)}>
      <div className="flex gap-1">
        <ProjectPanel />
        <ProgramMonitor />
      </div>
      <div className="flex flex-1 gap-1">
        <ToolBar />
        <TimelinePanel />
      </div>
    </div>
  );
}
